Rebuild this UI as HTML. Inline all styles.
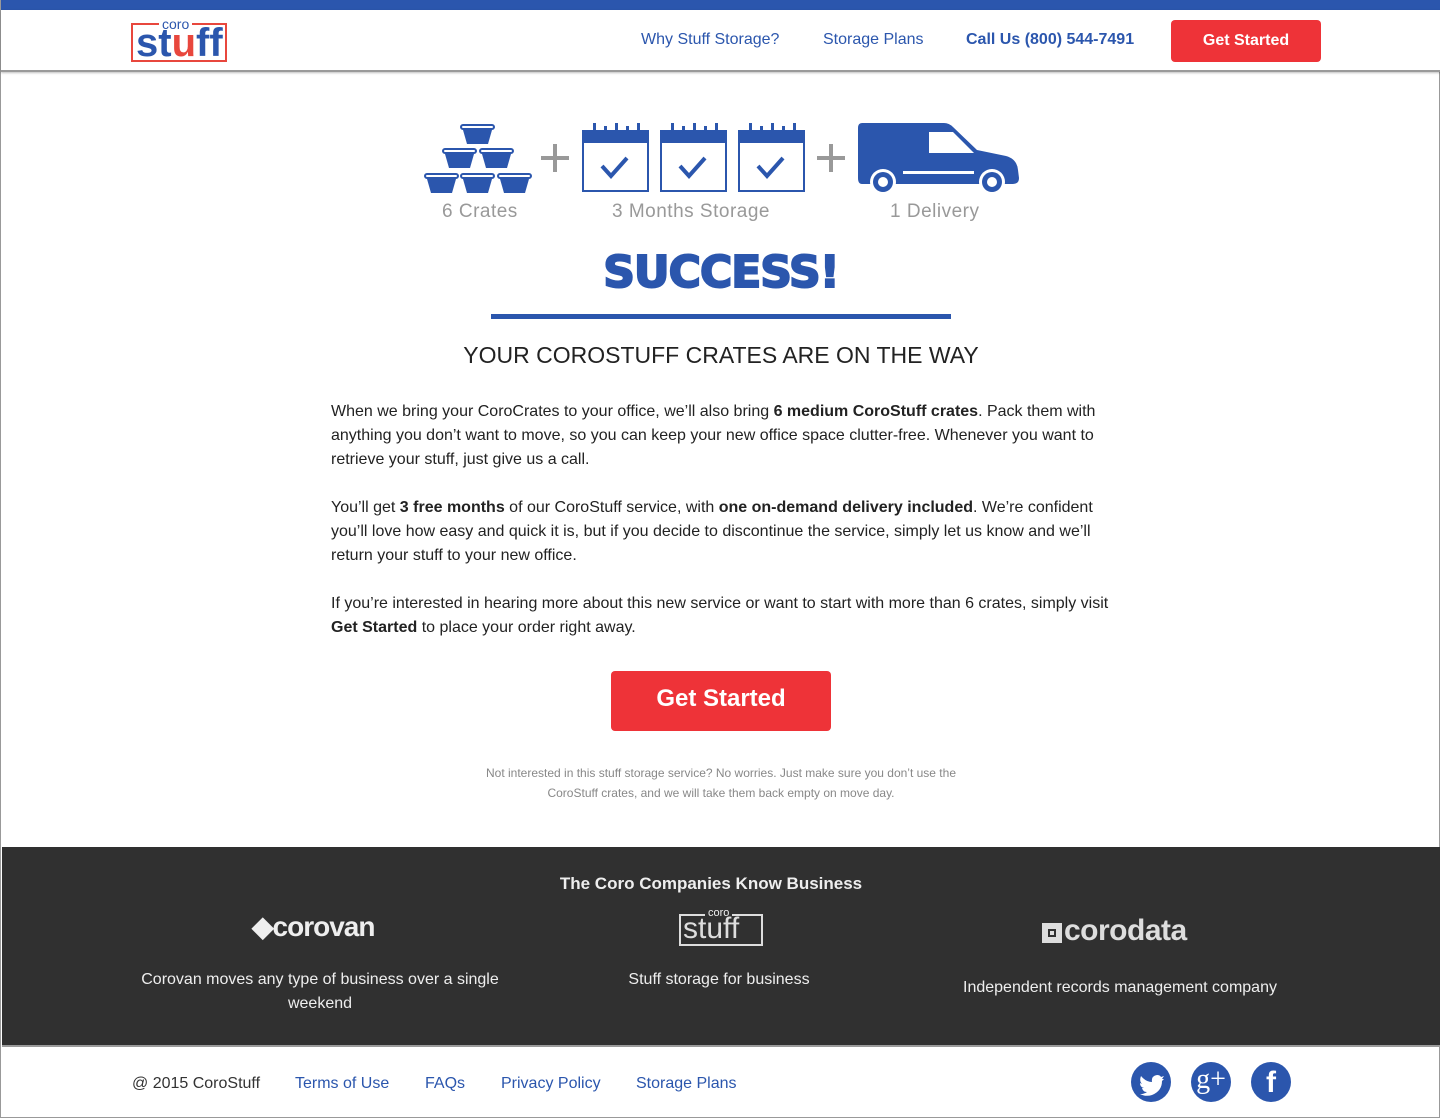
<!DOCTYPE html>
<html><head><meta charset="utf-8"><style>
*{margin:0;padding:0;box-sizing:border-box}
html,body{width:1440px;height:1118px;overflow:hidden;background:#fff;font-family:"Liberation Sans",Arial,sans-serif}
.page{position:absolute;left:0;top:0;width:1440px;height:1118px;border-left:1px solid #999;border-right:1px solid #999;border-bottom:1px solid #999}
.topbar{position:absolute;left:0;top:0;width:1440px;height:10px;background:#2b56ad}
.header{position:absolute;left:0;top:10px;width:1440px;height:62px;background:#fff;border-bottom:2px solid #9a9a9a;box-shadow:0 1px 2px rgba(0,0,0,.25)}
.nav a{position:absolute;top:21px;font-size:16px;color:#2b56ad;text-decoration:none}
.btn{position:absolute;background:#ee3338;color:#fff;font-weight:bold;text-align:center;border-radius:4px}
.abs{position:absolute}
.gray{color:#999;font-size:19px;letter-spacing:.5px}
p.body{position:absolute;left:330px;width:790px;font-size:16px;line-height:24px;color:#222}
.footer{position:absolute;left:1px;top:847px;width:1438px;height:200px;background:#303030;border-bottom:2px solid #9a9a9a;color:#eee}
.fl a{position:absolute;top:1074px;font-size:16px;color:#2b56ad}
.soc{position:absolute;top:1062px;width:40px;height:40px;border-radius:50%;background:#2b56ad}
</style></head><body><div class="page">
<div class="topbar"></div>
<div class="header">
 <div class="abs" style="left:130px;top:13px;width:96px;height:39px;border:2px solid #e8473d"></div>
 <div class="abs" style="left:158px;top:6px;background:#fff;padding:0 3px;font-size:14px;color:#2b56ad;line-height:16px">coro</div>
 <div class="abs" style="left:135px;top:12px;font-size:40px;font-weight:bold;color:#2b56ad;line-height:42px">st<span style="color:#e8473d">u</span>ff</div>
 <div class="nav"><a style="left:640px">Why Stuff Storage?</a><a style="left:822px">Storage Plans</a><a style="left:965px;font-weight:bold">Call Us (800) 544-7491</a></div>
 <div class="btn" style="left:1170px;top:10px;width:150px;height:42px;line-height:42px;font-size:16px">Get Started</div>
</div>

<svg class="abs" style="left:420px;top:120px" width="610" height="80" viewBox="0 0 610 80">
<defs><g id="cr"><rect x="1" y="1" width="33" height="4" rx="2" fill="none" stroke="#2b56ad" stroke-width="2"/><path d="M3 6h29l-4 14h-21z" fill="#2b56ad"/></g></defs>
<use href="#cr" x="39" y="4"/>
<use href="#cr" x="21" y="28"/><use href="#cr" x="58" y="28"/>
<use href="#cr" x="3" y="53"/><use href="#cr" x="39" y="53"/><use href="#cr" x="76" y="53"/>
<g fill="#999"><rect x="120" y="36" width="28" height="4"/><rect x="132" y="24" width="4" height="28"/>
<rect x="396" y="36" width="28" height="4"/><rect x="408" y="24" width="4" height="28"/></g>
<g id="cal" fill="#2b56ad"><rect x="161" y="10" width="67" height="14"/><rect x="162" y="22" width="65" height="49" fill="#fff" stroke="#2b56ad" stroke-width="2"/>
<rect x="172" y="3" width="3" height="15"/><rect x="183" y="6" width="3" height="12"/><rect x="194" y="3" width="3" height="15"/><rect x="205" y="6" width="3" height="12"/><rect x="216" y="3" width="3" height="15"/>
<path d="M181 46l9 10 16-18" fill="none" stroke="#2b56ad" stroke-width="4"/></g>
<use href="#cal" x="78"/><use href="#cal" x="156"/>
<g fill="#2b56ad">
<path d="M441 3H523Q528 3 532 7L556 30L585 36Q596 39 597 50L598 58Q598 64 592 64H441Q437 64 437 58V8Q437 3 441 3Z"/>
<path d="M508 12H532L553 33H508Z" fill="#fff"/><rect x="482" y="51" width="71" height="3" fill="#fff"/>
<circle cx="462" cy="62" r="13" fill="#fff"/><circle cx="462" cy="62" r="10"/><circle cx="462" cy="62" r="5" fill="#fff"/>
<circle cx="571" cy="62" r="13" fill="#fff"/><circle cx="571" cy="62" r="10"/><circle cx="571" cy="62" r="5" fill="#fff"/></g>
</svg>
<div class="abs gray" style="left:441px;top:201px">6 Crates</div>
<div class="abs gray" style="left:611px;top:201px">3 Months Storage</div>
<div class="abs gray" style="left:889px;top:201px">1 Delivery</div>
<div class="abs" style="left:0;width:1440px;top:247px;text-align:center;font-size:44px;font-weight:900;color:#2b56ad;font-family:'DejaVu Sans',sans-serif;letter-spacing:-1px;-webkit-text-stroke:2px #2b56ad">SUCCESS!</div>
<div class="abs" style="left:490px;top:314px;width:460px;height:5px;background:#2b56ad"></div>
<div class="abs" style="left:0;width:1440px;top:342px;text-align:center;font-size:23px;color:#222">YOUR COROSTUFF CRATES ARE ON THE WAY</div>
<p class="body" style="top:400px">When we bring your CoroCrates to your office, we’ll also bring <b>6 medium CoroStuff crates</b>. Pack them with anything you don’t want to move, so you can keep your new office space clutter-free. Whenever you want to retrieve your stuff, just give us a call.</p>
<p class="body" style="top:496px">You’ll get <b>3 free months</b> of our CoroStuff service, with <b>one on-demand delivery included</b>. We’re confident you’ll love how easy and quick it is, but if you decide to discontinue the service, simply let us know and we’ll return your stuff to your new office.</p>
<p class="body" style="top:592px">If you’re interested in hearing more about this new service or want to start with more than 6 crates, simply visit <b>Get Started</b> to place your order right away.</p>
<div class="btn" style="left:610px;top:671px;width:220px;height:60px;line-height:56px;font-size:24px">Get Started</div>
<div class="abs" style="left:470px;width:500px;top:763px;text-align:center;font-size:12px;line-height:20px;color:#888">Not interested in this stuff storage service? No worries. Just make sure you don’t use the CoroStuff crates, and we will take them back empty on move day.</div>

<div class="footer">
 <div class="abs" style="left:-10px;width:1438px;top:27px;text-align:center;font-size:17px;font-weight:bold">The Coro Companies Know Business</div>
 <div class="abs" style="left:250px;top:63px;font-size:28px;font-weight:bold;color:#eee;letter-spacing:-1px">◆corovan</div>
 <div class="abs" style="left:677px;top:67px;width:84px;height:32px;border:2px solid #ddd"></div>
 <div class="abs" style="left:703px;top:60px;background:#303030;padding:0 3px;font-size:11px;line-height:13px">coro</div>
 <div class="abs" style="left:681px;top:64px;font-size:30px;line-height:36px;color:#ddd">stuff</div>
 <div class="abs" style="left:1040px;top:76px;width:20px;height:20px;background:#ddd"><div style="margin:6px;width:8px;height:8px;border:2px solid #303030"></div></div>
 <div class="abs" style="left:1062px;top:67px;font-size:30px;font-weight:bold;color:#ddd;letter-spacing:-.5px">corodata</div>
 <div class="abs" style="left:128px;width:380px;top:121px;text-align:center;font-size:16px;line-height:24px">Corovan moves any type of business over a single weekend</div>
 <div class="abs" style="left:568px;width:298px;top:121px;text-align:center;font-size:16px;line-height:24px">Stuff storage for business</div>
 <div class="abs" style="left:918px;width:400px;top:129px;text-align:center;font-size:16px;line-height:24px">Independent records management company</div>
</div>
<div class="abs" style="left:131px;top:1075px;font-size:16px;color:#333">@ 2015 CoroStuff</div>
<div class="fl"><a style="left:294px;top:1075px">Terms of Use</a><a style="left:424px;top:1075px">FAQs</a><a style="left:500px;top:1075px">Privacy Policy</a><a style="left:635px;top:1075px">Storage Plans</a></div>
<div class="soc" style="left:1130px"><svg width="40" height="40" viewBox="0 0 40 40"><path d="M10 14q5 6 11 6q-1-6 5-7q3 0 4 2l3-1-2 3 2 0-2 2q0 10-10 14q-6 2-12-1q5 0 7-2q-4 0-5-4h2q-4-1-4-5l2 1q-3-3-1-8z" fill="#fff"/></svg></div>
<div class="soc" style="left:1190px;color:#fff;font-family:'Liberation Serif',serif;font-size:28px;line-height:36px;text-align:center">g+</div>
<div class="soc" style="left:1250px;color:#fff;font-weight:bold;font-size:30px;line-height:42px;text-align:center">f</div>
</div></body></html>
